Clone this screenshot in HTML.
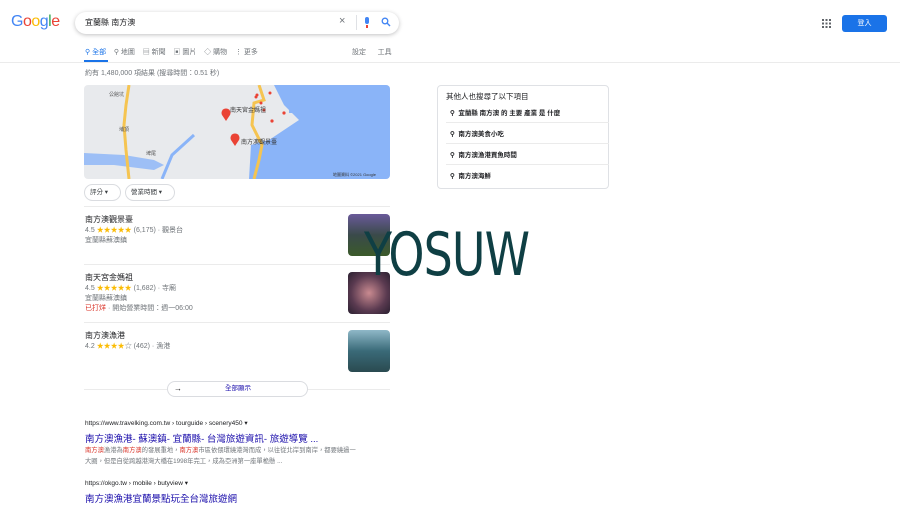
<!DOCTYPE html>
<html><head><meta charset="utf-8"><style>
*{margin:0;padding:0;box-sizing:border-box}
body{width:900px;height:506px;background:#fff;position:relative;overflow:hidden;font-family:"Liberation Sans","Noto Sans CJK TC",sans-serif;color:#202124}
.a{position:absolute;white-space:nowrap}
.s{font-size:7px;color:#70757a}
.t{font-size:8px;color:#202124}
.star{color:#fbbc04}
.sep{position:absolute;left:84px;width:306px;height:1px;background:#ebebeb}
.img{position:absolute;left:348px;width:42px;height:42px;border-radius:4px}
.ri{position:absolute;left:450px;font-size:6.5px;font-weight:bold;color:#202124}
.rl{position:absolute;left:446px;width:163px;height:1px;background:#ebebeb}
</style></head><body>
<div class="a" style="left:11px;top:13px;font-size:16px;letter-spacing:-0.5px"><span style="color:#4285f4">G</span><span style="color:#ea4335">o</span><span style="color:#fbbc05">o</span><span style="color:#4285f4">g</span><span style="color:#34a853">l</span><span style="color:#ea4335">e</span></div>
<div class="a" style="left:75px;top:12px;width:324px;height:22px;border-radius:11px;box-shadow:0 1px 4px rgba(32,33,36,.28)"></div>
<div class="a" style="left:85px;top:17px;font-size:8px">宜蘭縣 南方澳</div>
<div class="a" style="left:339px;top:15px;font-size:11px;color:#70757a">×</div>
<div class="a" style="left:356px;top:15px;width:1px;height:15px;background:#dfe1e5"></div>
<div class="a" style="left:365px;top:17px;width:4px;height:7px;border-radius:2px;background:#4285f4"></div>
<div class="a" style="left:366px;top:25px;width:2px;height:3px;background:#ea4335"></div>
<svg class="a" style="left:381px;top:17px" width="10" height="10" viewBox="0 0 10 10"><circle cx="4" cy="4" r="2.8" fill="none" stroke="#4285f4" stroke-width="1.3"/><path d="M6 6l3 3" stroke="#4285f4" stroke-width="1.4"/></svg>
<svg class="a" style="left:822px;top:19px" width="9" height="9"><g fill="#5f6368"><rect x="0" y="0" width="2" height="2"/><rect x="3.5" y="0" width="2" height="2"/><rect x="7" y="0" width="2" height="2"/><rect x="0" y="3.5" width="2" height="2"/><rect x="3.5" y="3.5" width="2" height="2"/><rect x="7" y="3.5" width="2" height="2"/><rect x="0" y="7" width="2" height="2"/><rect x="3.5" y="7" width="2" height="2"/><rect x="7" y="7" width="2" height="2"/></g></svg>
<div class="a" style="left:842px;top:15px;width:45px;height:17px;background:#1a73e8;border-radius:3px;color:#fff;font-size:7px;text-align:center;line-height:17px">登入</div>
<div class="a s" style="left:85px;top:47px;font-size:7px"><span style="color:#1a73e8">⚲ 全部</span>&nbsp;&nbsp;&nbsp;&nbsp;⚲ 地圖&nbsp;&nbsp;&nbsp;&nbsp;▤ 新聞&nbsp;&nbsp;&nbsp;&nbsp;▣ 圖片&nbsp;&nbsp;&nbsp;&nbsp;◇ 購物&nbsp;&nbsp;&nbsp;&nbsp;⋮ 更多</div>
<div class="a s" style="left:352px;top:47px">設定&nbsp;&nbsp;&nbsp;&nbsp;&nbsp;&nbsp;工具</div>
<div class="a" style="left:84px;top:60px;width:24px;height:2px;background:#1a73e8"></div>
<div class="a" style="left:0;top:62px;width:900px;height:1px;background:#ebebeb"></div>
<div class="a s" style="left:85px;top:68px">約有 1,480,000 項結果 (搜尋時間：0.51 秒)</div>
<svg class="a" style="left:84px;top:85px;border-radius:4px" width="306" height="94" viewBox="0 0 306 94">
<rect width="306" height="94" fill="#e8eaed"/>
<path d="M190 0 L306 0 L306 94 L165 94 L167 60 L185 55 L215 35 L200 20 L195 10 Z" fill="#8ab4f8"/>
<path d="M200 5 L230 5 L230 12 L200 12Z M205 22 L230 22 L230 28 L205 28Z" fill="#8ab4f8"/>
<path d="M0 68 L40 70 L70 75 L80 80 L70 85 L30 80 L0 80Z" fill="#8ab4f8" opacity=".8"/>
<path d="M110 50 L88 70 L78 94" stroke="#8ab4f8" stroke-width="3" fill="none"/>
<path d="M45 0 L42 20 L40 40 L42 65 L45 94" stroke="#f5c451" stroke-width="3" fill="none"/>
<path d="M175 0 L180 15 L170 18 L168 40 L178 60 L175 75 L170 94" stroke="#f5c451" stroke-width="3" fill="none"/>
<circle cx="200" cy="28" r="1.6" fill="#ea4335"/><circle cx="188" cy="36" r="1.6" fill="#ea4335"/>
<circle cx="172" cy="12" r="1.5" fill="#ea4335"/><circle cx="173" cy="10" r="1.5" fill="#ea4335"/><circle cx="177" cy="18" r="1.5" fill="#ea4335"/><circle cx="186" cy="8" r="1.5" fill="#ea4335"/><circle cx="180" cy="25" r="1.5" fill="#ea4335"/>
<path d="M142 36 L138 30 A4.5 4.5 0 1 1 146 30Z" fill="#ea4335"/>
<path d="M151 61 L147 55 A4.5 4.5 0 1 1 155 55Z" fill="#ea4335"/>
<text x="146" y="27" font-size="6" fill="#333">南天宮金媽祖</text>
<text x="157" y="59" font-size="6" fill="#333">南方澳觀景臺</text>
<text x="25" y="11" font-size="5" fill="#555">公館坑</text>
<text x="35" y="46" font-size="5" fill="#555">埔頂</text>
<text x="62" y="70" font-size="5" fill="#555">埤尾</text>
<text x="249" y="91" font-size="4" fill="#333">地圖資料 ©2021 Google</text>
</svg>
<div class="a" style="left:84px;top:184px;width:37px;height:17px;border:1px solid #dadce0;border-radius:9px;font-size:6.5px;color:#3c4043;line-height:15px;padding-left:5px">評分 ▾</div>
<div class="a" style="left:125px;top:184px;width:50px;height:17px;border:1px solid #dadce0;border-radius:9px;font-size:6.5px;color:#3c4043;line-height:15px;padding-left:5px">營業時間 ▾</div>
<div class="sep" style="top:206px"></div>
<div class="a t" style="left:85px;top:214px">南方澳觀景臺</div>
<div class="a s" style="left:85px;top:225px">4.5 <span class="star">★★★★★</span> (6,175) · 觀景台</div>
<div class="a s" style="left:85px;top:235px">宜蘭縣蘇澳鎮</div>
<div class="img" style="top:214px;background:linear-gradient(#6a5a9a,#3a4a4a 50%,#3b5a2a)"></div>
<div class="sep" style="top:264px"></div>
<div class="a t" style="left:85px;top:272px">南天宮金媽祖</div>
<div class="a s" style="left:85px;top:283px">4.5 <span class="star">★★★★★</span> (1,682) · 寺廟</div>
<div class="a s" style="left:85px;top:293px">宜蘭縣蘇澳鎮</div>
<div class="a s" style="left:85px;top:303px"><span style="color:#d93025">已打烊</span> · 開始營業時間：週一06:00</div>
<div class="img" style="top:272px;background:radial-gradient(#c98a90,#5a3a50 60%,#2a2030)"></div>
<div class="sep" style="top:322px"></div>
<div class="a t" style="left:85px;top:330px">南方澳漁港</div>
<div class="a s" style="left:85px;top:341px">4.2 <span class="star">★★★★</span>☆ (462) · 漁港</div>
<div class="img" style="top:330px;background:linear-gradient(#8fb8c8,#3a6a78 50%,#2a4a50)"></div>
<div class="sep" style="top:389px"></div>
<div class="a" style="left:167px;top:381px;width:141px;height:16px;border:1px solid #dadce0;border-radius:8px;background:#fff;font-size:6.5px;color:#1a0dab;line-height:14px"><span style="position:absolute;left:6px;font-size:8px;color:#202124">→</span><span style="position:absolute;left:57px">全部顯示</span></div>
<div class="a" style="left:85px;top:419px;font-size:6.5px;color:#202124">https://www.travelking.com.tw › tourguide › scenery450 ▾</div>
<div class="a" style="left:85px;top:431px;font-size:9.5px;color:#1a0dab">南方澳漁港- 蘇澳鎮- 宜蘭縣- 台灣旅遊資訊- 旅遊導覽 ...</div>
<div class="a s" style="left:85px;top:445px;font-size:6.3px"><span style="color:#d93025">南方澳</span>漁港為<span style="color:#d93025">南方澳</span>的發展重地，<span style="color:#d93025">南方澳</span>市區依偎環繞港灣而成，以往從北岸到南岸，都要繞過一</div>
<div class="a s" style="left:85px;top:456px;font-size:6.3px">大圈，但是自從跨越港灣大橋在1998年完工，成為亞洲第一座單桅懸 ...</div>
<div class="a" style="left:85px;top:479px;font-size:6.5px;color:#202124">https://okgo.tw › mobile › butyview ▾</div>
<div class="a" style="left:85px;top:491px;font-size:9.5px;color:#1a0dab">南方澳漁港宜蘭景點玩全台灣旅遊網</div>
<div class="a" style="left:437px;top:85px;width:172px;height:104px;border:1px solid #dfe1e5;border-radius:4px"></div>
<div class="a t" style="left:446px;top:91px;font-size:7.5px">其他人也搜尋了以下項目</div>
<div class="ri" style="top:107px">⚲&nbsp;&nbsp;宜蘭縣 南方澳 的 主要 產業 是 什麼</div>
<div class="rl" style="top:122px"></div>
<div class="ri" style="top:128px">⚲&nbsp;&nbsp;南方澳美食小吃</div>
<div class="rl" style="top:143px"></div>
<div class="ri" style="top:149px">⚲&nbsp;&nbsp;南方澳漁港買魚時間</div>
<div class="rl" style="top:164px"></div>
<div class="ri" style="top:170px">⚲&nbsp;&nbsp;南方澳海鮮</div>
<div class="a" style="left:364px;top:220px;font-size:60px;color:#0f3f44;font-family:'DejaVu Sans Condensed','Liberation Sans Narrow',sans-serif;font-weight:200;letter-spacing:-1px;transform:scaleX(.85);transform-origin:left">YOSUW</div>
</body></html>
